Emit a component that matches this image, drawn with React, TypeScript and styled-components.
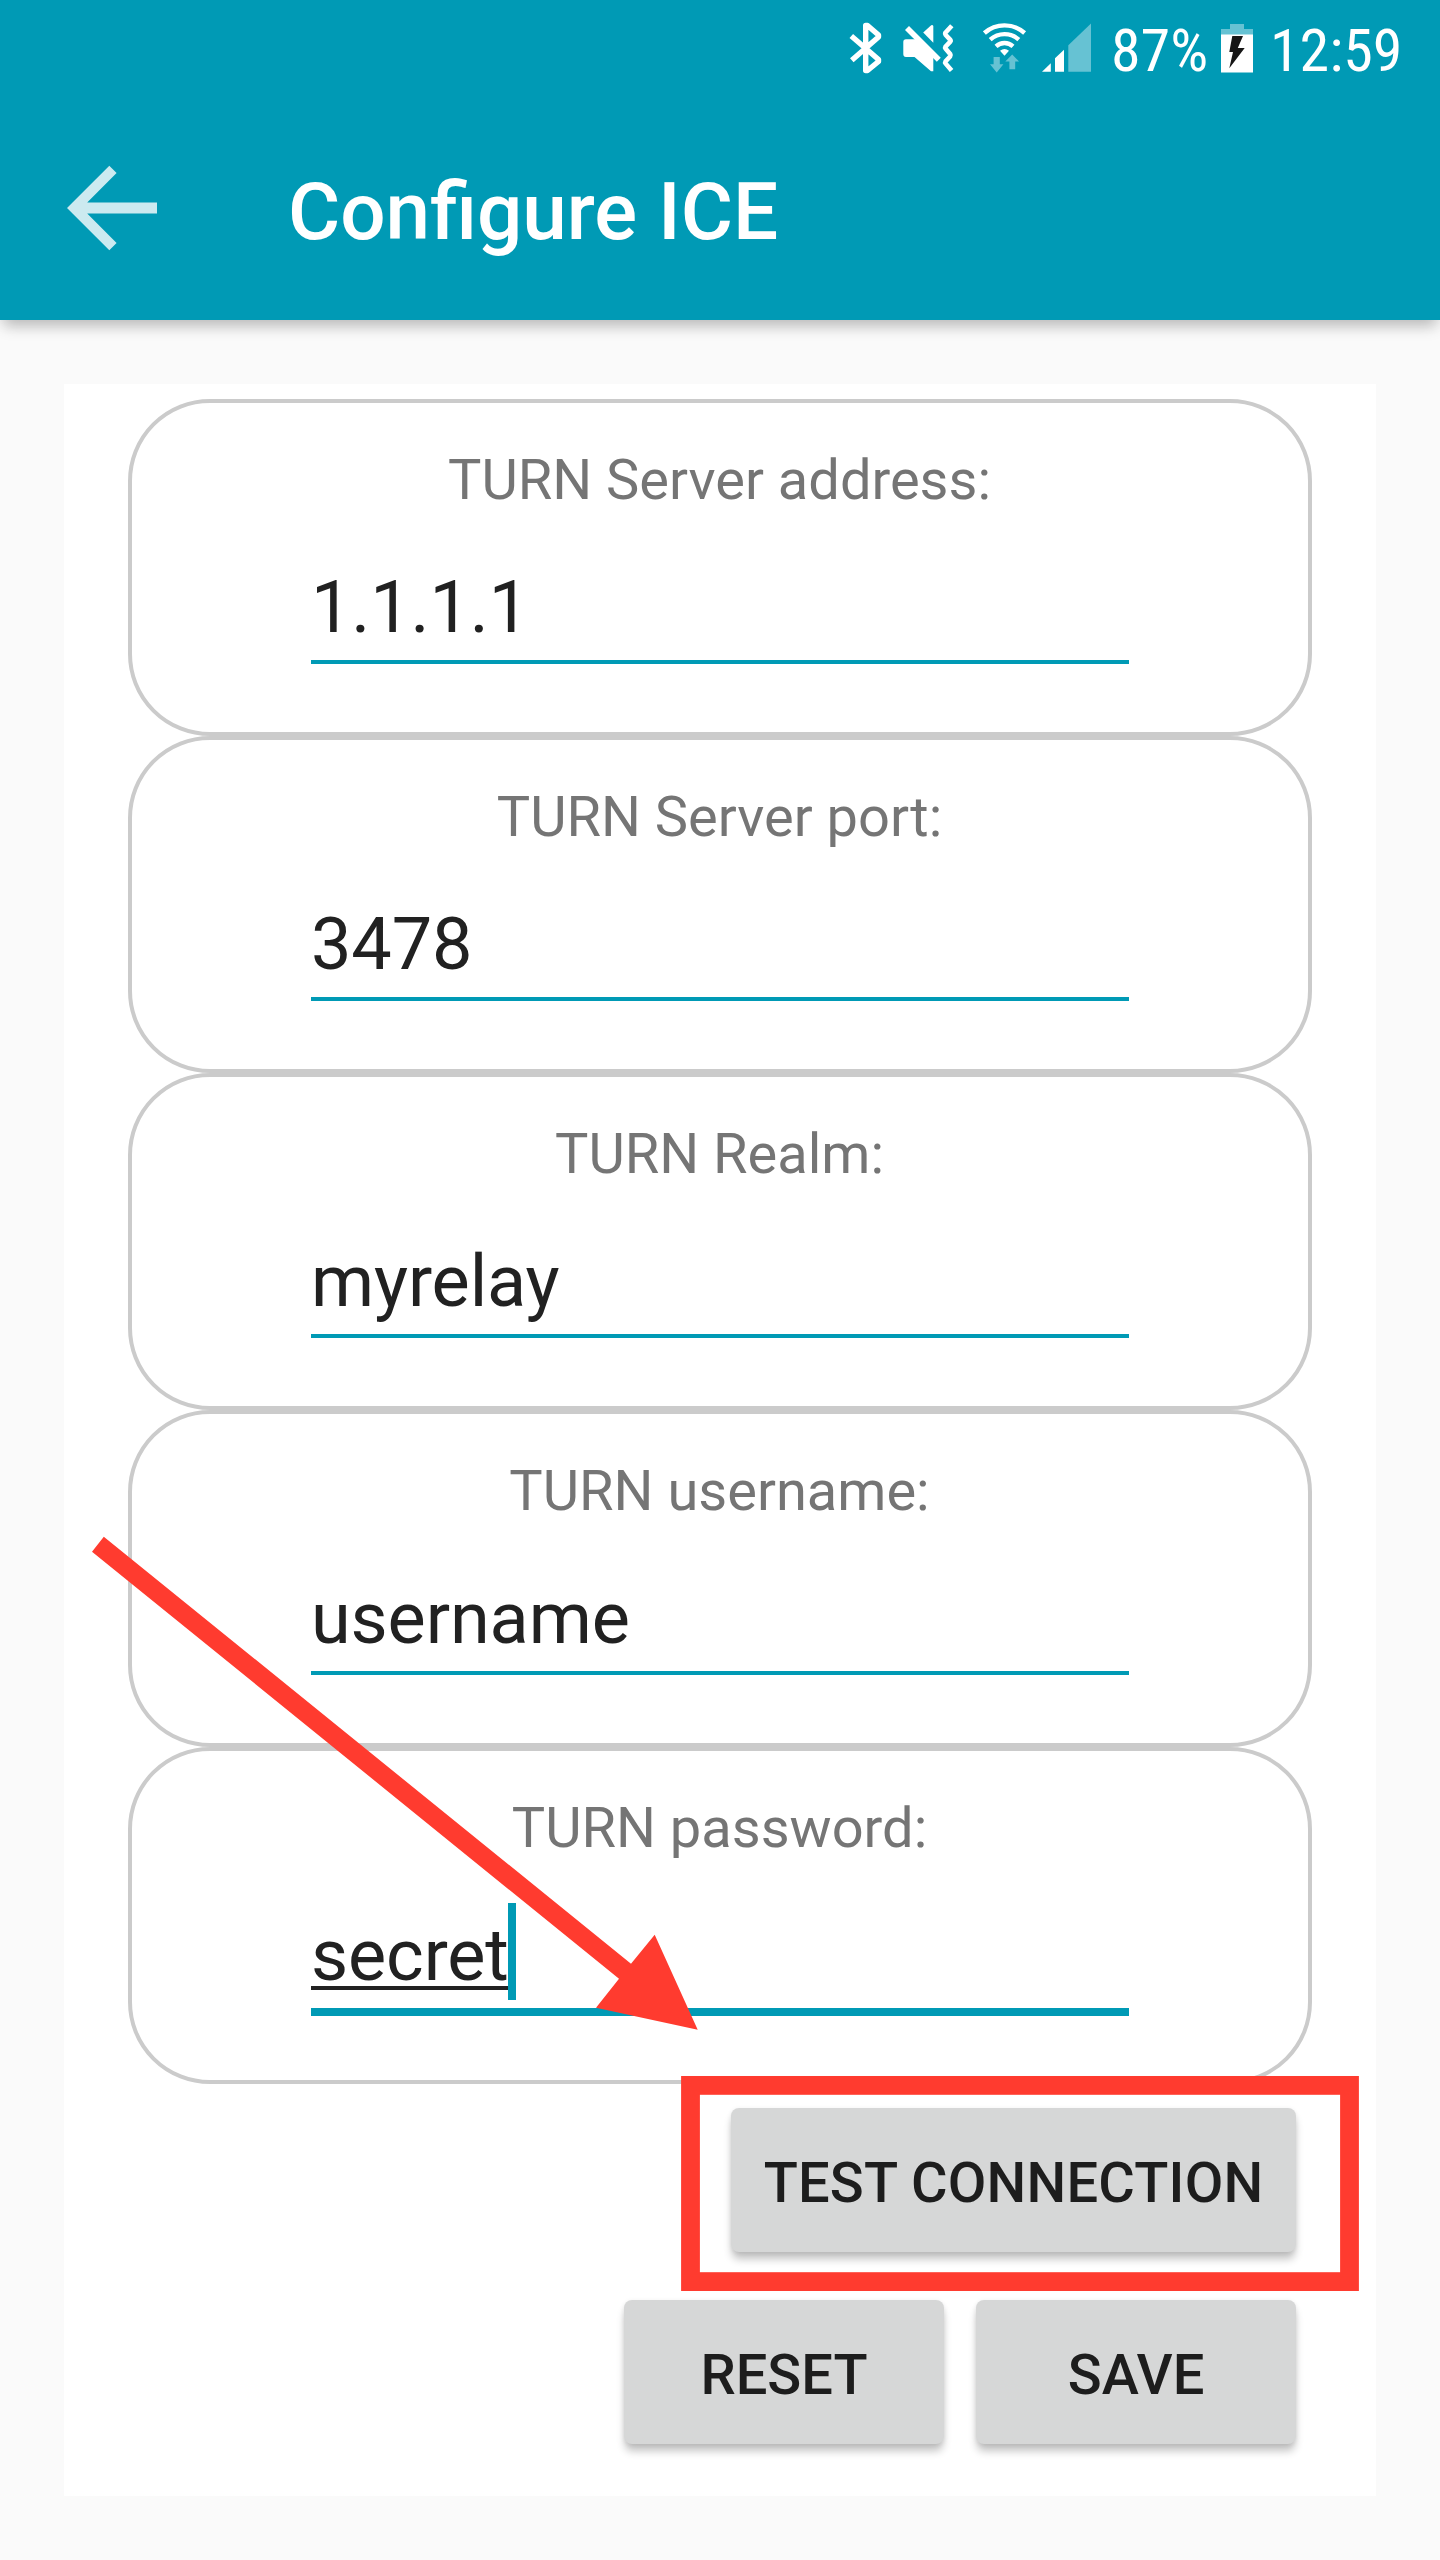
import React from "react";
import styled, { createGlobalStyle } from "styled-components";

const TEAL = "#009ab5";
const RED = "#ff3b2f";

const GlobalStyle = createGlobalStyle`
  html, body { margin: 0; padding: 0; background: #fafafa; }
  * { box-sizing: border-box; }
`;

const Screen = styled.div`
  position: relative;
  width: 1440px;
  height: 2560px;
  overflow: hidden;
  background: #fafafa;
  font-family: Roboto, "Liberation Sans", sans-serif;
`;

const Header = styled.header`
  height: 320px;
  background: ${TEAL};
  box-shadow: 0 10px 14px -4px rgba(0, 0, 0, 0.23), 0 4px 14px rgba(0, 0, 0, 0.05);
`;

const StatusBar = styled.div`
  display: flex;
  align-items: center;
  justify-content: flex-end;
  height: 96px;
  padding-right: 39px;
  color: #fff;
`;

const StatusIcon = styled.svg<{ $gap: number }>`
  display: block;
  flex: none;
  margin-right: ${(p) => p.$gap}px;
`;

const StatusText = styled.span<{ $width: number; $gap: number }>`
  width: ${(p) => p.$width}px;
  margin-right: ${(p) => p.$gap}px;
  padding-top: 5px;
  font-family: "Roboto Condensed", Roboto, sans-serif;
  font-size: 60px;
  line-height: 70px;
  font-stretch: 75%;
  white-space: nowrap;
`;

const Toolbar = styled.div`
  display: flex;
  align-items: center;
  height: 224px;
  padding-left: 64px;
`;

const Title = styled.h1`
  margin: 8px 0 0 128px;
  font-size: 80px;
  line-height: 94px;
  font-weight: 500;
  word-spacing: 1px;
  color: #fff;
`;

const Card = styled.main`
  width: 1312px;
  height: 2112px;
  margin: 64px;
  padding: 15px 64px 52px;
  background: #fff;
`;

const Group = styled.section`
  display: flex;
  flex-direction: column;
  align-items: center;
  height: 337px;
  padding-top: 44px;
  border: 4px solid #cbcbcb;
  border-radius: 82px;
`;

const Label = styled.label`
  margin-right: 1px;
  font-size: 56px;
  line-height: 66px;
  color: #757575;
`;

const Field = styled.div<{ $focused?: boolean }>`
  width: 818px;
  height: ${(p) => (p.$focused ? 103 : 99)}px;
  margin-top: 52px;
  padding-top: 1px;
  border-bottom: ${(p) => (p.$focused ? 8 : 4)}px solid ${TEAL};
  font-size: 72px;
  line-height: 84px;
  letter-spacing: -0.12px;
  color: #212121;
`;

const Composing = styled.span`
  position: relative;
  text-decoration: underline;
  text-decoration-thickness: 4px;
  text-underline-offset: 6px;
  text-decoration-skip-ink: none;
`;

const Cursor = styled.i`
  position: absolute;
  top: -10px;
  right: -7px;
  width: 8px;
  height: 97px;
  background: ${TEAL};
`;

const Actions = styled.div<{ $top: number }>`
  display: flex;
  justify-content: flex-end;
  gap: 32px;
  margin-top: ${(p) => p.$top}px;
  padding-right: 16px;
`;

const Button = styled.button<{ $width: number; $tracking?: number }>`
  width: ${(p) => p.$width}px;
  height: 144px;
  padding: 6px 0 0;
  border: 0;
  border-radius: 8px;
  background: #d6d7d7;
  box-shadow: 0 8px 8px -1px rgba(0, 0, 0, 0.24), 0 1px 5px rgba(0, 0, 0, 0.08);
  font-family: inherit;
  font-size: 56px;
  line-height: 66px;
  font-weight: 500;
  letter-spacing: ${(p) => p.$tracking ?? 0}px;
  color: #1d1d1d;
  white-space: nowrap;
`;

const Annotations = styled.svg`
  position: absolute;
  inset: 0;
  pointer-events: none;
`;

const fields = [
  { label: "TURN Server address:", value: "1.1.1.1" },
  { label: "TURN Server port:", value: "3478" },
  { label: "TURN Realm:", value: "myrelay" },
  { label: "TURN username:", value: "username" },
  { label: "TURN password:", value: "secret", focused: true },
];

const BluetoothIcon = () => (
  <StatusIcon $gap={19} width="36" height="96" viewBox="848 0 36 96" fill="none" stroke="#fff" strokeWidth="5.4" strokeLinejoin="round">
    <path d="M851.3 36 L878.5 59.5 V61.5 L867.5 70.5 H865.7 V25.5 H867.5 L878.5 35 V37 L851.8 60.2" />
  </StatusIcon>
);

const MuteVibrateIcon = () => (
  <StatusIcon $gap={28} width="52" height="96" viewBox="903 0 52 96" fill="#fff">
    <path d="M906 39.2 H918 L933.3 54 V71.3 H931 L914.5 57 H906 Q903.3 57 903.3 54 V42 Q903.3 39.2 906 39.2 Z" />
    <path d="M923.2 32.6 L931.2 25.2 Q933.3 24.2 933.3 26.5 V42.8 Z" />
    <path d="M907 28 L938.8 59.7" stroke="#fff" strokeWidth="5.6" />
    <path d="M951.8 25.8 L945.2 33 Q944.8 34 945.5 34.8 L950.3 39.8 Q951 40.8 950.3 41.6 L945.5 46.6 Q944.8 47.7 945.5 48.6 L950.3 54.2 Q951 55.3 950.3 56.2 L945.5 61.4 Q944.8 62.5 945.5 63.4 L951.6 70.6" fill="none" stroke="#fff" strokeWidth="4.6" />
  </StatusIcon>
);

const WifiIcon = () => (
  <StatusIcon $gap={15} width="44" height="96" viewBox="983 0 44 96">
    <g fill="none" stroke="#fff" strokeWidth="4.4">
      <path d="M984.4 33 A30.3 30.3 0 0 1 1024.6 33" />
      <path d="M990.2 39.6 A21.5 21.5 0 0 1 1018.8 39.6" />
      <path d="M996 46.3 A12.8 12.8 0 0 1 1013 46.3" />
    </g>
    <path d="M1004.5 55.8 L1000 50.8 Q1004.5 47.2 1009 50.8 Z" fill="#fff" />
    <g fill="#66c2d3">
      <path d="M993.6 57 H999.8 V64.3 H1003.4 L996.7 72.5 L990 64.3 H993.6 Z" />
      <path d="M1009.4 69.2 H1015.2 V61.4 H1019 L1012.2 54.5 L1005.3 61.4 H1009.4 Z" />
    </g>
  </StatusIcon>
);

const SignalIcon = () => (
  <StatusIcon $gap={20} width="49" height="96" viewBox="1042 0 49 96" fill="#fff">
    <path d="M1042 71.8 L1050.8 63.2 V71.8 Z" />
    <path d="M1055 58.3 L1064 49.7 V71.8 H1055 Z" />
    <path d="M1068.3 45.3 L1091 23.4 V71.8 H1068.3 Z" fill="#66c2d3" />
  </StatusIcon>
);

const BatteryIcon = () => (
  <StatusIcon $gap={17} width="32" height="96" viewBox="1221 0 32 96">
    <path d="M1230 24 H1244 V29 H1253 V35 H1221 V29 H1230 Z" fill="#66c2d3" />
    <path d="M1221 34.6 H1253 V72.5 H1221 Z" fill="#fff" />
    <path d="M1232.3 36 H1243 L1237.8 48 H1244.7 L1229.3 68.2 L1233 52 H1229.3 Z" fill="#161616" />
  </StatusIcon>
);

const BackIcon = () => (
  <svg width="96" height="96" viewBox="64 160 96 96" fill="#cceaf0" role="img" aria-label="Back">
    <path d="M67 208 L109.3 165.7 L116.6 173 L87.2 202.4 H157 V213.6 H87.2 L116.6 243 L109.3 250.3 Z" />
  </svg>
);

export default function App() {
  return (
    <>
      <GlobalStyle />
      <Screen>
        <Header>
          <StatusBar>
            <BluetoothIcon />
            <MuteVibrateIcon />
            <WifiIcon />
            <SignalIcon />
            <StatusText $width={95} $gap={15}>87%</StatusText>
            <BatteryIcon />
            <StatusText $width={131} $gap={0}>12:59</StatusText>
          </StatusBar>
          <Toolbar>
            <BackIcon />
            <Title>Configure ICE</Title>
          </Toolbar>
        </Header>
        <Card>
          {fields.map((f) => (
            <Group key={f.label}>
              <Label>{f.label}</Label>
              <Field $focused={f.focused}>
                {f.focused ? (
                  <Composing>
                    {f.value}
                    <Cursor />
                  </Composing>
                ) : (
                  f.value
                )}
              </Field>
            </Group>
          ))}
          <Actions $top={24}>
            <Button $width={565} $tracking={0.2}>TEST CONNECTION</Button>
          </Actions>
          <Actions $top={48}>
            <Button $width={320}>RESET</Button>
            <Button $width={320}>SAVE</Button>
          </Actions>
        </Card>
        <Annotations width="1440" height="2560" viewBox="0 0 1440 2560">
          <path d="M103.8 1536.7 L631 1963.7 L654.7 1934.7 L697.7 2029.7 L596 2007.7 L619 1978.7 L92 1551.7 Z" fill={RED} />
          <rect x="690.5" y="2085.4" width="659" height="196.2" fill="none" stroke={RED} strokeWidth="18.8" />
        </Annotations>
      </Screen>
    </>
  );
}
